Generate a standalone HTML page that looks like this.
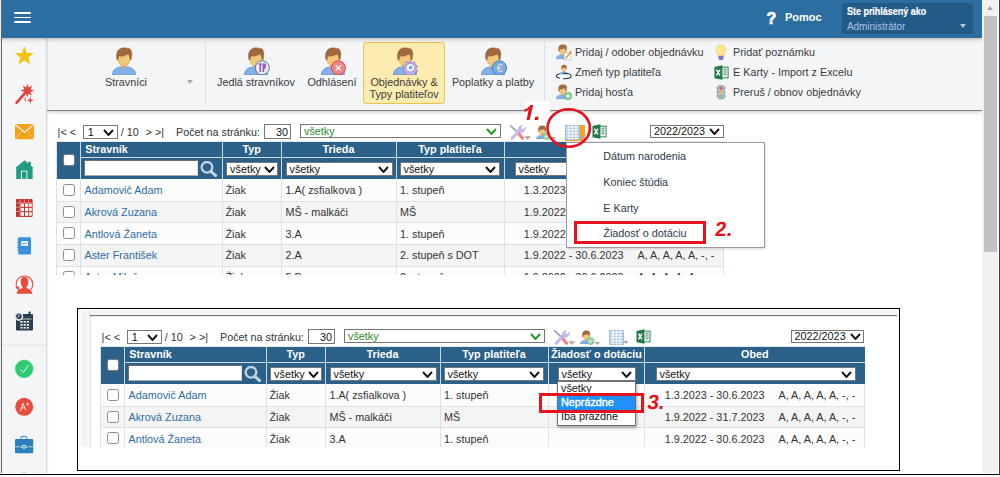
<!DOCTYPE html>
<html><head><meta charset="utf-8">
<style>
*{box-sizing:border-box}
html,body{margin:0;padding:0}
body{width:1000px;height:477px;overflow:hidden;position:relative;background:#fff;font-family:"Liberation Sans",sans-serif;font-size:10.8px;color:#333}
.a{position:absolute}
#hdr{left:0;top:0;width:982px;height:38px;background:#2c6ea2;z-index:5;box-shadow:0 1px 4px rgba(0,0,0,.28)}
#side{left:0;top:38px;width:47px;height:436px;background:#f4f5f7;border-right:1px solid #d8dadd;box-shadow:1px 0 1px rgba(0,0,0,.06);z-index:2}
#tb{left:47px;top:38px;width:935px;height:72px;background:#f4f5f7;box-shadow:0 1px 0 #7d828c, 0 2px 4px rgba(0,0,0,.22)}
#sb{left:982px;top:0;width:16px;height:473px;background:#f1f1f1;z-index:10}
#frameL{left:1px;top:0;width:1px;height:474px;background:#666;z-index:10}
#frameL0{left:0;top:0;width:1px;height:474px;background:#eee;z-index:10}
#frameW{left:998px;top:0;width:1px;height:474px;background:#fff;z-index:10}
#frameWB{left:0;top:473px;width:999px;height:1px;background:#fff;z-index:10}
#frameR{left:999px;top:0;width:1px;height:475px;background:#3a3f48;z-index:10}
#frameB{left:0;top:474px;width:1000px;height:1px;background:#000;z-index:10}
.tbt{color:#3a3a3a;text-align:center;white-space:nowrap;line-height:11px}
.lnk{color:#3a3a3a;white-space:nowrap}
</style></head><body>
<div id="hdr" class="a">
  <div class="a" style="left:14px;top:12px;width:17px;height:1.7px;background:#fff;border-radius:1px"></div>
  <div class="a" style="left:14px;top:16.7px;width:17px;height:1.7px;background:#fff;border-radius:1px"></div>
  <div class="a" style="left:14px;top:21.4px;width:17px;height:1.7px;background:#fff;border-radius:1px"></div>
  <div class="a" style="left:766.6px;top:9.8px;font:bold 16px 'Liberation Sans',sans-serif;color:#fff;-webkit-text-stroke:.7px #fff">?</div>
  <div class="a" style="left:785.4px;top:11px;font:bold 11.5px 'Liberation Sans',sans-serif;color:#fff;transform:scaleX(.955);transform-origin:0 0">Pomoc</div>
  <div class="a" style="left:842px;top:3px;width:131px;height:31px;background:#245a86;border-radius:3px">
    <div class="a" style="left:5px;top:2px;font:bold 10.67px 'Liberation Sans',sans-serif;color:#fff;transform:scaleX(.84);transform-origin:0 0;white-space:nowrap;-webkit-text-stroke:.2px #fff">Ste prihlásený ako</div>
    <div class="a" style="left:5px;top:17px;font:11.5px 'Liberation Sans',sans-serif;color:#a8c6e4;transform:scaleX(.86);transform-origin:0 0;white-space:nowrap">Administrátor</div>
    <div class="a" style="left:118px;top:21px;width:0;height:0;border-left:3.5px solid transparent;border-right:3.5px solid transparent;border-top:4px solid #b9c8d6"></div>
  </div>
</div>
<div id="side" class="a">
<svg class="a" style="left:0;top:0" width="46" height="436" viewBox="0 38 46 436">
  <path d="M24.4,46 L26.8,52.9 34,53.1 28.3,57.5 30.3,64.6 24.4,60.4 18.5,64.6 20.5,57.5 14.8,53.1 22,52.9 Z" fill="#f3c316"/>
  <path d="M16.6,102.6 L26.6,91.4" stroke="#e3463a" stroke-width="2.8" stroke-linecap="round"/>
  <path d="M27.4,83.6 L28.6,87.6 32.2,85.6 30.6,89.4 34.2,90.8 30.4,92 32,95.6 28.4,93.8 27.2,97.6 26,93.8 22.4,95.4 24.2,92 20.6,90.6 24.2,89.2 22.8,85.4 26.2,87.4 Z" fill="#e3463a"/>
  <path d="M30.2,96.6 L31,99.4 33.8,100.3 31,101.2 30.2,104 29.4,101.2 26.6,100.3 29.4,99.4 Z" fill="#e3463a"/>
  <path d="M25.2,97.5 v4" stroke="#e3463a" stroke-width="1"/>
  <rect x="15" y="124" width="19" height="15.3" fill="#f5a21b"/>
  <path d="M15.3,124.6 L24.5,132.2 33.7,124.6" fill="none" stroke="#fff" stroke-width="1.1"/>
  <path d="M15.3,138.8 L21.5,131.5 M33.7,138.8 L27.5,131.5" fill="none" stroke="#fde6c0" stroke-width=".6"/>
  <path d="M24.5,160.2 L33.8,168.2 L32.6,168.2 L32.6,179 L16.2,179 L16.2,168.2 L15,168.2 Z" fill="#1f9c83"/>
  <rect x="28.2" y="161.8" width="2.6" height="5" fill="#1f9c83"/>
  <rect x="21.4" y="171.2" width="5.5" height="8" fill="#1f9c83" stroke="#e6f4f0" stroke-width="1"/>
  <g fill="#c4302b">
    <rect x="16" y="199" width="16.6" height="17.9" rx="1"/>
  </g>
  <g fill="#fff">
    <rect x="20.7" y="203.6" width="3.3" height="3.2"/><rect x="25" y="203.6" width="3.3" height="3.2"/><rect x="29.2" y="203.6" width="2.5" height="3.2"/>
    <rect x="20.7" y="207.9" width="3.3" height="3.2"/><rect x="25" y="207.9" width="3.3" height="3.2"/><rect x="29.2" y="207.9" width="2.5" height="3.2"/>
    <rect x="20.7" y="212.2" width="3.3" height="3.6"/><rect x="25" y="212.2" width="3.3" height="3.6"/><rect x="29.2" y="212.2" width="2.5" height="3.6"/>
  </g>
  <path d="M16,202.9 H32.6 M16,207.2 H20 M16,211.5 H20 M20.1,199 V217 M24.4,199 V203 M28.7,199 V203" stroke="#f4a9a3" stroke-width=".7"/>
  <rect x="18.2" y="237.2" width="12.8" height="17.3" rx="1.2" fill="#3b91dc"/>
  <rect x="21.2" y="241.2" width="6.8" height="4.6" fill="#fff"/>
  <path d="M22,243.5 h5.2" stroke="#3b91dc" stroke-width=".8"/>
  <path d="M17,240 h2.4 M17,242.5 h2.4 M17,245 h2.4 M17,247.5 h2.4 M17,250 h2.4" stroke="#3b91dc" stroke-width=".9"/>
  <path d="M17.4,288.6 A8.3,8.3 0 1 1 30.8,289.6" fill="none" stroke="#e84b3c" stroke-width="1.1"/>
  <path d="M15.3,287.2 L18.8,290.4 L19.6,286.6 Z" fill="#e84b3c"/>
  <path d="M24.4,277 C21.4,277 20.6,279.6 20.8,282.4 C21,285 22,286.4 22.6,287 L22.6,288.2 C19,289 16.8,290.6 16.8,293.8 L32.2,293.8 C32.2,290.6 30,289 26.4,288.2 L26.4,287 C27,286.4 28,285 28.2,282.4 C28.4,279.6 27.6,277 24.4,277 Z" fill="#e84b3c"/>
  <rect x="16" y="314" width="17" height="16.6" rx="1" fill="#2c3e50"/>
  <rect x="17.4" y="318.6" width="14.2" height=".8" fill="#e8ecef"/>
  <rect x="28.5" y="311.6" width="2" height="3.5" fill="#2c3e50" transform="rotate(20 29.5 313)"/>
  <circle cx="18.9" cy="316.4" r="4.3" fill="#f4f5f7"/>
  <circle cx="18.9" cy="316.4" r="3.3" fill="#2c3e50" stroke="#e9edf0" stroke-width=".9"/>
  <path d="M18.9,314.4 v2.1 l-1.4,1.1" fill="none" stroke="#fff" stroke-width=".8"/>
  <g fill="#e8ecef">
    <rect x="20.4" y="321" width="2.2" height="1.8"/><rect x="23.6" y="321" width="2.2" height="1.8"/><rect x="26.8" y="321" width="2.2" height="1.8"/>
    <rect x="20.4" y="324" width="2.2" height="1.8"/><rect x="23.6" y="324" width="2.2" height="1.8"/><rect x="26.8" y="324" width="2.2" height="1.8"/>
    <rect x="20.4" y="327" width="2.2" height="1.6"/><rect x="23.6" y="327" width="2.2" height="1.6"/><rect x="26.8" y="327" width="2.2" height="1.6"/>
  </g>
  <rect x="2" y="344.5" width="44" height="1" fill="#dfe1e4"/>
  <circle cx="24.2" cy="368.9" r="8.8" fill="#2ecc71" stroke="#2ecc71" stroke-width="1" stroke-dasharray="1.3 1"/>
  <path d="M20.4,369.2 L23.4,372.4 L28.4,365.2" fill="none" stroke="#fff" stroke-width=".9"/>
  <circle cx="24.2" cy="406.8" r="9" fill="#e74c3c"/>
  <path d="M20.4,411 L22.8,403.2 L25.8,410.2 M21.4,408 L24.8,407.6 M27.6,402.6 v3.2 M26,404.2 h3.2" fill="none" stroke="#fbe3df" stroke-width="1"/>
  <rect x="21" y="436.4" width="5.8" height="3" rx="1" fill="none" stroke="#2980b9" stroke-width="1"/>
  <rect x="15" y="439" width="18.2" height="14.3" rx="1" fill="#2a80bc"/>
  <rect x="15" y="446.2" width="18.2" height="1.2" fill="#8fbfe0"/>
  <ellipse cx="24" cy="446.8" rx="1.9" ry="1.5" fill="#2a80bc" stroke="#fff" stroke-width="1"/>
  <circle cx="24.2" cy="481.5" r="9" fill="#2ecc71"/>
</svg>
</div>
<div id="tb" class="a"></div>
<svg width="0" height="0" style="position:absolute">
<defs>
<symbol id="person" viewBox="0 0 24 28">
  <path d="M0.5,27.6 C0.5,22.4 5,19.8 12,19.8 C19,19.8 23.5,22.4 23.5,27.6 Z" fill="#84b1ea" stroke="#5b8fd2" stroke-width=".8"/>
  <rect x="9.6" y="16" width="4.8" height="4.6" fill="#e0aa5c"/>
  <path d="M5.8,11.2 C5.8,6.6 8.4,4.6 12,4.6 C15.6,4.6 18.2,6.6 18.2,11.2 C18.2,15.6 15.6,19 12,19 C8.4,19 5.8,15.6 5.8,11.2 Z" fill="#f2c77a" stroke="#cf9a52" stroke-width=".6"/>
  <path d="M5,13 C3.8,8.2 4.5,3.6 8.4,1.6 C10.4,0.5 13.6,0.5 15.6,1.4 C17.2,1.1 18.6,2.1 19.1,3.6 C20.3,5.8 19.9,9.4 19,13 L18,12.2 C17.8,9.8 17.2,8.2 16.1,7.1 C14,8.6 10.2,9.6 6.9,9.1 C6.4,10.1 6.2,11.2 6.1,12.6 Z" fill="#a0693e" stroke="#8a5732" stroke-width=".4"/>
</symbol>
</defs></svg>
<div class="a" style="left:205px;top:42px;width:1px;height:63px;background:#dcdee2"></div>
<div class="a" style="left:544px;top:42px;width:1px;height:63px;background:#dcdee2"></div>
<svg class="a" style="left:112px;top:47px" width="24" height="28"><use href="#person"/></svg>
<div class="a tbt" style="left:96px;top:77px;width:60px">Stravníci</div>
<div class="a" style="left:187px;top:80px;width:0;height:0;border-left:3.5px solid transparent;border-right:3.5px solid transparent;border-top:4px solid #a9a9a9"></div>

<svg class="a" style="left:244px;top:47px" width="28" height="28">
  <svg x="0" y="0" width="24" height="28"><use href="#person"/></svg>
  <circle cx="18.3" cy="20.8" r="7" fill="#eeebf3" stroke="#557a9c" stroke-width="1"/>
  <path d="M14.6,17 h3.4 M16.3,17 v8 M19.4,16.8 v8.2 M19.4,16.8 c2.4,0 2.6,4.4 0,4.6" fill="none" stroke="#8a5db3" stroke-width="1.6"/>
</svg>
<div class="a tbt" style="left:211px;top:77px;width:90px">Jedlá stravníkov</div>

<svg class="a" style="left:321px;top:47px" width="28" height="28">
  <svg x="0" y="0" width="24" height="28"><use href="#person"/></svg>
  <circle cx="17.4" cy="20.8" r="7" fill="#f08686" stroke="#d9424e" stroke-width="1"/>
  <path d="M14.8,18.2 L20,23.4 M20,18.2 L14.8,23.4" stroke="#fff" stroke-width="1.3"/>
</svg>
<div class="a tbt" style="left:302px;top:77px;width:60px">Odhlásení</div>

<div class="a" style="left:363px;top:42px;width:82px;height:62px;background:#fcecb0;border:1px solid #f0c04a;border-radius:3px"></div>
<svg class="a" style="left:393px;top:47px" width="28" height="28">
  <svg x="0" y="0" width="24" height="28"><use href="#person"/></svg>
  <g transform="translate(17.3,20.8)">
    <path d="M0,-7.5 L1.6,-5.2 4.4,-5.9 4.9,-3.1 7.3,-1.6 6,1 7.3,3.4 4.7,4.6 4.1,7.4 1.4,6.7 -0.2,7.8 -1.8,6.6 -4.4,7.2 -4.9,4.5 -7.4,3.1 -6,0.8 -7.2,-1.9 -4.6,-3.2 -4,-6 -1.4,-5.3 Z" fill="#c4b2ea" stroke="#9378cc" stroke-width=".7"/>
    <circle r="4.3" fill="#fff" stroke="#a38bd6" stroke-width="1"/>
    <circle r="1.9" cx=".3" cy="-.2" fill="#7aa6e0"/>
  </g>
</svg>
<div class="a tbt" style="left:364px;top:77px;width:80px;line-height:11.7px">Objednávky &amp;<br>Typy platiteľov</div>

<svg class="a" style="left:481px;top:47px" width="28" height="28">
  <svg x="0" y="0" width="24" height="28"><use href="#person"/></svg>
  <circle cx="18.4" cy="21" r="7.2" fill="#79a9e6" stroke="#4a80c2" stroke-width="1"/>
  <text x="18.6" y="25.2" font-family="Liberation Sans" font-size="11" fill="#f5e7a8" text-anchor="middle">€</text>
</svg>
<div class="a tbt" style="left:448px;top:77px;width:90px">Poplatky a platby</div>

<div class="a lnk" style="left:575px;top:46px">Pridaj / odober objednávku</div>
<div class="a lnk" style="left:575px;top:66px">Zmeň typ platiteľa</div>
<div class="a lnk" style="left:575px;top:86px">Pridaj hosťa</div>
<div class="a lnk" style="left:733px;top:46px">Pridať poznámku</div>
<div class="a lnk" style="left:733px;top:66px">E Karty - Import z Excelu</div>
<div class="a lnk" style="left:733px;top:86px">Preruš / obnov objednávky</div>

<svg class="a" style="left:556px;top:44px" width="17" height="17">
  <svg x="0" y="0" width="13" height="15.5" viewBox="0 0 24 28"><use href="#person"/></svg>
  <path d="M8,9 h7 v7 h-7 z" fill="#fff" stroke="#9ab" stroke-width=".6"/>
  <path d="M9.5,14.5 L14.5,8.5" stroke="#e0a030" stroke-width="1.6"/>
  <path d="M14,8.8 l1,-1.2" stroke="#e0555a" stroke-width="1.6"/>
</svg>
<svg class="a" style="left:555px;top:63px" width="18" height="17">
  <svg x="4.6" y="1.6" width="8.6" height="10" viewBox="0 0 24 28"><use href="#person"/></svg>
  <ellipse cx="8.8" cy="13" rx="7.4" ry="2.7" fill="none" stroke="#2a3a4a" stroke-width="1.1" stroke-dasharray="9 3"/>
</svg>
<svg class="a" style="left:556px;top:84px" width="17" height="17">
  <svg x="0" y="0" width="13" height="15.5" viewBox="0 0 24 28"><use href="#person"/></svg>
  <circle cx="12" cy="12" r="3.7" fill="#7fcf94" stroke="#52a86a" stroke-width=".6"/>
  <path d="M12,9.8 v4.4 M9.8,12 h4.4" stroke="#fff" stroke-width="1.2"/>
</svg>
<svg class="a" style="left:714px;top:44px" width="14" height="17">
  <path d="M7,1 C3.8,1 2,3.3 2,6 C2,8.3 3.6,9.4 4.3,11.5 L9.7,11.5 C10.4,9.4 12,8.3 12,6 C12,3.3 10.2,1 7,1 Z" fill="#fae78e" stroke="#e6cf6a" stroke-width=".6"/>
  <path d="M4.4,11.8 h5.2 v2.4 c0,1 -1,1.8 -2.6,1.8 c-1.6,0 -2.6,-.8 -2.6,-1.8 z" fill="#8a6fc0"/>
</svg>
<svg class="a" style="left:713.5px;top:65px" width="15" height="15" viewBox="0 0 16 16">
  <path d="M0.5,2 L9,0.3 L9,15.7 L0.5,14 Z" fill="#21794a"/>
  <rect x="8.5" y="2.3" width="6.5" height="11.4" fill="#fff" stroke="#21794a" stroke-width="1"/>
  <path d="M10,4.5 h3.5 M10,6.5 h3.5 M10,8.5 h3.5 M10,10.5 h3.5" stroke="#21794a" stroke-width=".9"/>
  <path d="M2.6,5 L6.4,11 M6.4,5 L2.6,11" stroke="#fff" stroke-width="1.5"/>
</svg>
<svg class="a" style="left:715px;top:84px" width="12" height="16">
  <rect x="2.5" y="1.5" width="7" height="13.5" rx="2" fill="#b3bfcc" stroke="#8996a6" stroke-width=".7"/>
  <path d="M1,4 h1.5 M9.5,4 h1.5 M1,8 h1.5 M9.5,8 h1.5 M1,12 h1.5 M9.5,12 h1.5" stroke="#8996a6" stroke-width="1"/>
  <circle cx="6" cy="4.3" r="1.7" fill="#e06060"/>
  <circle cx="6" cy="8.3" r="1.7" fill="#e8b84a"/>
  <circle cx="6" cy="12.3" r="1.7" fill="#7cc47c"/>
</svg>

<div class="a" style="left:57.6px;top:126.26px;line-height:12px;font-size:10.8px;font-weight:normal;color:#333;white-space:nowrap;">|&lt; &lt;</div>
<div class="a" style="left:83.2px;top:125.4px;width:34.5px;height:13.4px;background:#fff;border:1px solid #767676"></div><div class="a" style="left:87.7px;top:125.6px;line-height:13px;color:#111;font-size:10.8px;white-space:nowrap">1</div><svg class="a" style="left:103.2px;top:128.7px" width="11" height="7"><path d="M1,1 L5.5,6 L10,1" fill="none" stroke="#111" stroke-width="1.9"/></svg>
<div class="a" style="left:120.8px;top:126.26px;line-height:12px;font-size:10.8px;font-weight:normal;color:#333;white-space:nowrap;">/ 10</div>
<div class="a" style="left:145.6px;top:126.26px;line-height:12px;font-size:10.8px;font-weight:normal;color:#333;white-space:nowrap;">&gt; &gt;|</div>
<div class="a" style="left:176px;top:126.26px;line-height:12px;font-size:10.8px;font-weight:normal;color:#333;white-space:nowrap;">Počet na stránku:</div>
<div class="a" style="left:264px;top:124px;width:26.5px;height:15px;background:#fff;border:1px solid #767676"></div>
<div class="a" style="left:276px;top:126.26px;line-height:12px;font-size:10.8px;font-weight:normal;color:#111;white-space:nowrap;">30</div>
<div class="a" style="left:300px;top:124px;width:200.5px;height:14.2px;background:#fff;border:1px solid #767676"></div><div class="a" style="left:304px;top:124.6px;line-height:13px;color:#2e8b2e;font-size:10.8px;white-space:nowrap">všetky</div><svg class="a" style="left:486.0px;top:127.69999999999999px" width="11" height="7"><path d="M1,1 L5.5,6 L10,1" fill="none" stroke="#1c9a1c" stroke-width="1.9"/></svg>
<svg class="a" style="left:510px;top:124.6px" width="22" height="16">
<path d="M0.8,0.8 L6.8,6.6" stroke="#8da5bd" stroke-width="1.6" stroke-linecap="round"/>
<path d="M8.6,8.4 L12.6,13.2" stroke="#ee8585" stroke-width="3.2" stroke-linecap="round"/>
<path d="M2.2,13.2 L9.6,5.6" stroke="#c9b9ea" stroke-width="3.2" stroke-linecap="round"/>
<path d="M8.4,6.6 C7.6,3.6 9.4,0.6 12.4,0.6 L10.8,2.6 L12,4.6 L14.2,4 L15.4,2 C15.8,5 13.4,7.6 10.2,7.4 Z" fill="#c9b9ea" stroke="#ad9bd8" stroke-width=".5"/>
<path d="M14.2,11.2 h7 l-3.5,3.6 z" fill="#a9a9a9"/>
</svg>
<svg class="a" style="left:536px;top:124.6px" width="22" height="16">
<svg x="0" y="0" width="12" height="14.5" viewBox="0 0 24 28"><use href="#person"/></svg>
<circle cx="10.5" cy="11" r="3.6" fill="#9bd3a6" stroke="#6cb57c" stroke-width=".6"/>
<path d="M8.8,11 l1.3,1.4 2.3,-2.6" fill="none" stroke="#fff" stroke-width=".9"/>
<path d="M14.5,12 h5.6 l-2.8,3 z" fill="#a9a9a9"/>
</svg>
<svg class="a" style="left:565px;top:124.6px" width="22" height="18"><rect x="0" y="0" width="20" height="17.2" fill="#f9a51a"/><rect x="0.4" y="0.4" width="14" height="14.4" fill="#fff"/><rect x="0.5" y="0.5" width="14" height="14" fill="#cfe0f3" stroke="#8fb2d8" stroke-width=".8"/><path d="M4,0.5 v14 M7.5,0.5 v14 M11,0.5 v14" stroke="#fff" stroke-width="1.4"/><path d="M0.5,3.5 h14 M0.5,6.5 h14 M0.5,9.5 h14 M0.5,12.5 h14" stroke="#9dbde0" stroke-width=".5"/><path d="M14,11 h5.6 l-2.8,3 z" fill="#a9a9a9"/></svg>
<svg class="a" style="left:591.8px;top:124.4px" width="15" height="15" viewBox="0 0 16 16">
<path d="M0.5,2 L9,0.3 L9,15.7 L0.5,14 Z" fill="#21794a"/>
<rect x="8.5" y="2.3" width="6.5" height="11.4" fill="#fff" stroke="#21794a" stroke-width="1"/>
<path d="M10,4.5 h3.5 M10,6.5 h3.5 M10,8.5 h3.5 M10,10.5 h3.5" stroke="#21794a" stroke-width=".9"/>
<path d="M2.6,5 L6.4,11 M6.4,5 L2.6,11" stroke="#fff" stroke-width="1.5"/>
</svg>
<div class="a" style="left:650px;top:125px;width:73.75px;height:13.2px;background:#fff;border:1px solid #767676"></div><div class="a" style="left:654px;top:125.1px;line-height:13px;color:#111;font-size:10.8px;white-space:nowrap">2022/2023</div><svg class="a" style="left:709.25px;top:128.2px" width="11" height="7"><path d="M1,1 L5.5,6 L10,1" fill="none" stroke="#111" stroke-width="1.9"/></svg>
<div class="a" style="left:56px;top:141px;width:668px;height:1px;background:#e3eaef"></div>
<div class="a" style="left:56px;top:142px;width:668px;height:133px;overflow:hidden">
<div class="a" style="left:1px;top:0;width:667px;height:37px;background:#2b6089"></div>
<div class="a" style="left:0;top:0;width:1px;height:37px;background:#dbe4ea"></div>
<div class="a" style="left:24.5px;top:15px;width:643.5px;height:1.4px;background:#cddbe6"></div>
<div class="a" style="left:0;top:37px;width:668px;height:22.69999999999999px;background:#fcfcfc"></div>
<div class="a" style="left:0;top:59.69999999999999px;width:668px;height:21.700000000000017px;background:#f4f4f4"></div>
<div class="a" style="left:0;top:81.4px;width:668px;height:21.69999999999999px;background:#fcfcfc"></div>
<div class="a" style="left:0;top:103.1px;width:668px;height:21.700000000000017px;background:#f4f4f4"></div>
<div class="a" style="left:0;top:124.80000000000001px;width:668px;height:21.69999999999999px;background:#fcfcfc"></div>
<div class="a" style="left:0;top:58.69999999999999px;width:668px;height:1.1px;background:#d9e3ea"></div>
<div class="a" style="left:0;top:80.4px;width:668px;height:1.1px;background:#d9e3ea"></div>
<div class="a" style="left:0;top:102.1px;width:668px;height:1.1px;background:#d9e3ea"></div>
<div class="a" style="left:0;top:123.80000000000001px;width:668px;height:1.1px;background:#d9e3ea"></div>
<div class="a" style="left:0;top:145.5px;width:668px;height:1.1px;background:#d9e3ea"></div>
<div class="a" style="left:24.0px;top:0;width:1.3px;height:37px;background:#cddbe6"></div>
<div class="a" style="left:24.0px;top:37px;width:1.2px;height:200px;background:#d9e3ea"></div>
<div class="a" style="left:166.0px;top:0;width:1.3px;height:37px;background:#cddbe6"></div>
<div class="a" style="left:166.0px;top:37px;width:1.2px;height:200px;background:#d9e3ea"></div>
<div class="a" style="left:224.5px;top:0;width:1.3px;height:37px;background:#cddbe6"></div>
<div class="a" style="left:224.5px;top:37px;width:1.2px;height:200px;background:#d9e3ea"></div>
<div class="a" style="left:339.5px;top:0;width:1.3px;height:37px;background:#cddbe6"></div>
<div class="a" style="left:339.5px;top:37px;width:1.2px;height:200px;background:#d9e3ea"></div>
<div class="a" style="left:447.5px;top:0;width:1.3px;height:37px;background:#cddbe6"></div>
<div class="a" style="left:447.5px;top:37px;width:1.2px;height:200px;background:#d9e3ea"></div>
<div class="a" style="left:0;top:37px;width:1px;height:200px;background:#d9e3ea"></div>
<div class="a" style="left:667px;top:37px;width:1px;height:200px;background:#d9e3ea"></div>
<div class="a" style="left:7.2px;top:12.2px;width:12px;height:12px;background:#fff;border:1.2px solid #7b7b7b;border-radius:2.5px"></div>
<div class="a" style="left:29.2px;top:1.26px;line-height:12px;font-size:10.8px;font-weight:bold;color:#fff;white-space:nowrap;">Stravník</div>
<div class="a" style="left:28.2px;top:18.3px;width:113.5px;height:15.3px;background:#fff;border:1px solid #6d6d6d;border-right-color:#ddd;border-bottom-color:#aaa"></div>
<svg class="a" style="left:143.6px;top:19.2px" width="18" height="16">
<circle cx="7" cy="6.3" r="5.3" fill="none" stroke="#c3d3e0" stroke-width="2.3"/>
<path d="M10.8,10.4 L15.6,14.6" stroke="#c3d3e0" stroke-width="3" stroke-linecap="round"/>
</svg>
<div class="a" style="left:166.5px;width:58.5px;text-align:center;top:1.26px;line-height:12px;font-size:10.8px;font-weight:bold;color:#fff;white-space:nowrap">Typ</div>
<div class="a" style="left:170.3px;top:20.4px;width:52px;height:13.4px;background:#fff;border:1px solid #767676"></div><div class="a" style="left:174.10000000000002px;top:20.599999999999998px;line-height:13px;color:#111;font-size:10.8px;white-space:nowrap">všetky</div><svg class="a" style="left:207.8px;top:23.7px" width="11" height="7"><path d="M1,1 L5.5,6 L10,1" fill="none" stroke="#111" stroke-width="1.9"/></svg>
<div class="a" style="left:225px;width:115px;text-align:center;top:1.26px;line-height:12px;font-size:10.8px;font-weight:bold;color:#fff;white-space:nowrap">Trieda</div>
<div class="a" style="left:229.5px;top:20.4px;width:107px;height:13.4px;background:#fff;border:1px solid #767676"></div><div class="a" style="left:233.5px;top:20.599999999999998px;line-height:13px;color:#111;font-size:10.8px;white-space:nowrap">všetky</div><svg class="a" style="left:322.0px;top:23.7px" width="11" height="7"><path d="M1,1 L5.5,6 L10,1" fill="none" stroke="#111" stroke-width="1.9"/></svg>
<div class="a" style="left:340px;width:108px;text-align:center;top:1.26px;line-height:12px;font-size:10.8px;font-weight:bold;color:#fff;white-space:nowrap">Typ platiteľa</div>
<div class="a" style="left:343.5px;top:20.4px;width:100px;height:13.4px;background:#fff;border:1px solid #767676"></div><div class="a" style="left:347.5px;top:20.599999999999998px;line-height:13px;color:#111;font-size:10.8px;white-space:nowrap">všetky</div><svg class="a" style="left:429.0px;top:23.7px" width="11" height="7"><path d="M1,1 L5.5,6 L10,1" fill="none" stroke="#111" stroke-width="1.9"/></svg>
<div class="a" style="left:448px;width:220px;text-align:center;top:1.26px;line-height:12px;font-size:10.8px;font-weight:bold;color:#fff;white-space:nowrap">Obed</div>
<div class="a" style="left:458.5px;top:20.4px;width:200px;height:13.4px;background:#fff;border:1px solid #767676"></div><div class="a" style="left:462.5px;top:20.599999999999998px;line-height:13px;color:#111;font-size:10.8px;white-space:nowrap">všetky</div><svg class="a" style="left:644.0px;top:23.7px" width="11" height="7"><path d="M1,1 L5.5,6 L10,1" fill="none" stroke="#111" stroke-width="1.9"/></svg>
<div class="a" style="left:7.2px;top:42.0px;width:12px;height:12px;background:#fff;border:1.2px solid #8d8d8d;border-radius:2.5px"></div>
<div class="a" style="left:28.5px;top:42.16px;line-height:12px;font-size:10.8px;font-weight:normal;color:#2e6da4;white-space:nowrap;">Adamovič Adam</div>
<div class="a" style="left:169.4px;top:42.16px;line-height:12px;font-size:10.8px;font-weight:normal;color:#333;white-space:nowrap;">Žiak</div>
<div class="a" style="left:229.4px;top:42.16px;line-height:12px;font-size:10.8px;font-weight:normal;color:#333;white-space:nowrap;">1.A( zsfialkova )</div>
<div class="a" style="left:344px;top:42.16px;line-height:12px;font-size:10.8px;font-weight:normal;color:#333;white-space:nowrap;">1. stupeň</div>
<div class="a" style="left:467.75px;top:42.16px;line-height:12px;font-size:10.8px;font-weight:normal;color:#333;white-space:nowrap;">1.3.2023 - 30.6.2023</div>
<div class="a" style="left:581.5px;top:42.16px;line-height:12px;font-size:10.8px;font-weight:normal;color:#333;white-space:nowrap;">A, A, A, A, A, -, -</div>
<div class="a" style="left:7.2px;top:63.7px;width:12px;height:12px;background:#fff;border:1.2px solid #8d8d8d;border-radius:2.5px"></div>
<div class="a" style="left:28.5px;top:63.86px;line-height:12px;font-size:10.8px;font-weight:normal;color:#2e6da4;white-space:nowrap;">Akrová Zuzana</div>
<div class="a" style="left:169.4px;top:63.86px;line-height:12px;font-size:10.8px;font-weight:normal;color:#333;white-space:nowrap;">Žiak</div>
<div class="a" style="left:229.4px;top:63.86px;line-height:12px;font-size:10.8px;font-weight:normal;color:#333;white-space:nowrap;">MŠ - malkáči</div>
<div class="a" style="left:344px;top:63.86px;line-height:12px;font-size:10.8px;font-weight:normal;color:#333;white-space:nowrap;">MŠ</div>
<div class="a" style="left:467.75px;top:63.86px;line-height:12px;font-size:10.8px;font-weight:normal;color:#333;white-space:nowrap;">1.9.2022 - 31.7.2023</div>
<div class="a" style="left:581.5px;top:63.86px;line-height:12px;font-size:10.8px;font-weight:normal;color:#333;white-space:nowrap;">A, A, A, A, A, -, -</div>
<div class="a" style="left:7.2px;top:85.4px;width:12px;height:12px;background:#fff;border:1.2px solid #8d8d8d;border-radius:2.5px"></div>
<div class="a" style="left:28.5px;top:85.56px;line-height:12px;font-size:10.8px;font-weight:normal;color:#2e6da4;white-space:nowrap;">Antlová Žaneta</div>
<div class="a" style="left:169.4px;top:85.56px;line-height:12px;font-size:10.8px;font-weight:normal;color:#333;white-space:nowrap;">Žiak</div>
<div class="a" style="left:229.4px;top:85.56px;line-height:12px;font-size:10.8px;font-weight:normal;color:#333;white-space:nowrap;">3.A</div>
<div class="a" style="left:344px;top:85.56px;line-height:12px;font-size:10.8px;font-weight:normal;color:#333;white-space:nowrap;">1. stupeň</div>
<div class="a" style="left:467.75px;top:85.56px;line-height:12px;font-size:10.8px;font-weight:normal;color:#333;white-space:nowrap;">1.9.2022 - 30.6.2023</div>
<div class="a" style="left:581.5px;top:85.56px;line-height:12px;font-size:10.8px;font-weight:normal;color:#333;white-space:nowrap;">A, A, A, A, A, -, -</div>
<div class="a" style="left:7.2px;top:107.1px;width:12px;height:12px;background:#fff;border:1.2px solid #8d8d8d;border-radius:2.5px"></div>
<div class="a" style="left:28.5px;top:107.26px;line-height:12px;font-size:10.8px;font-weight:normal;color:#2e6da4;white-space:nowrap;">Aster František</div>
<div class="a" style="left:169.4px;top:107.26px;line-height:12px;font-size:10.8px;font-weight:normal;color:#333;white-space:nowrap;">Žiak</div>
<div class="a" style="left:229.4px;top:107.26px;line-height:12px;font-size:10.8px;font-weight:normal;color:#333;white-space:nowrap;">2.A</div>
<div class="a" style="left:344px;top:107.26px;line-height:12px;font-size:10.8px;font-weight:normal;color:#333;white-space:nowrap;">2. stupeň s DOT</div>
<div class="a" style="left:467.75px;top:107.26px;line-height:12px;font-size:10.8px;font-weight:normal;color:#333;white-space:nowrap;">1.9.2022 - 30.6.2023</div>
<div class="a" style="left:581.5px;top:107.26px;line-height:12px;font-size:10.8px;font-weight:normal;color:#333;white-space:nowrap;">A, A, A, A, A, -, -</div>
<div class="a" style="left:7.2px;top:128.8px;width:12px;height:12px;background:#fff;border:1.2px solid #8d8d8d;border-radius:2.5px"></div>
<div class="a" style="left:28.5px;top:128.96px;line-height:12px;font-size:10.8px;font-weight:normal;color:#2e6da4;white-space:nowrap;">Aster Miloš</div>
<div class="a" style="left:169.4px;top:128.96px;line-height:12px;font-size:10.8px;font-weight:normal;color:#333;white-space:nowrap;">Žiak</div>
<div class="a" style="left:229.4px;top:128.96px;line-height:12px;font-size:10.8px;font-weight:normal;color:#333;white-space:nowrap;">5.B</div>
<div class="a" style="left:344px;top:128.96px;line-height:12px;font-size:10.8px;font-weight:normal;color:#333;white-space:nowrap;">2. stupeň</div>
<div class="a" style="left:467.75px;top:128.96px;line-height:12px;font-size:10.8px;font-weight:normal;color:#333;white-space:nowrap;">1.9.2022 - 30.6.2023</div>
<div class="a" style="left:581.5px;top:128.96px;line-height:12px;font-size:10.8px;font-weight:normal;color:#333;white-space:nowrap;">A, A, A, A, A, -, -</div>
</div>
<div class="a" style="left:565.5px;top:141.8px;width:199px;height:106.4px;background:#fff;border:1px solid #9a9a9a;box-shadow:1px 1px 2px rgba(0,0,0,.15)"></div>
<div class="a" style="left:603.3px;top:150.26px;line-height:12px;font-size:10.8px;font-weight:normal;color:#2c3a4a;white-space:nowrap;">Dátum narodenia</div>
<div class="a" style="left:603.3px;top:176.26px;line-height:12px;font-size:10.8px;font-weight:normal;color:#2c3a4a;white-space:nowrap;">Koniec štúdia</div>
<div class="a" style="left:603.3px;top:201.76px;line-height:12px;font-size:10.8px;font-weight:normal;color:#2c3a4a;white-space:nowrap;">E Karty</div>
<div class="a" style="left:603.3px;top:227.26px;line-height:12px;font-size:10.8px;font-weight:normal;color:#2c3a4a;white-space:nowrap;">Žiadosť o dotáciu</div>
<div class="a" style="left:574px;top:220.6px;width:132px;height:23.2px;border:3px solid #e5131d"></div>
<div class="a" style="left:714.2px;top:217.2px;font:bold 20.5px Liberation Sans,sans-serif;color:#e5131d;line-height:24px;transform:skewX(-6deg);transform-origin:0 100%">2.</div>
<div class="a" style="left:524.6px;top:100.5px;width:25px;height:22px;background:#fff"></div>
<svg class="a" style="left:520px;top:100px" width="24" height="24"><path d="M13.3,5 L10.3,5 C9.2,7 7,8.6 4.3,9.4 L4.6,11.8 C6.2,11.4 7.6,10.6 8.6,9.8 L6.6,20 L9.6,20 Z M15.2,16.8 L18.6,16.8 L18,20 L14.6,20 Z" fill="#e5131d"/></svg>
<svg class="a" style="left:540px;top:100px" width="60" height="55"><ellipse cx="28.7" cy="28" rx="21.2" ry="18.8" fill="none" stroke="#e5131d" stroke-width="2.6"/></svg>
<div class="a" style="left:77px;top:308px;width:823px;height:163px;border:1.2px solid #000;background:#fff"></div>
<div class="a" style="left:81px;top:310px;width:816px;height:137px;overflow:hidden"><div class="a" style="left:-81px;top:-310px;width:1000px;height:477px">
<div class="a" style="left:81px;top:310px;width:9.7px;height:140px;background:#f4f5f7;border-right:1px solid #dfe1e4"></div>
<div class="a" style="left:90.4px;top:310px;width:807px;height:5px;background:#f4f5f7;box-shadow:0 1px 1px #777"></div>
<div class="a" style="left:101.6px;top:331.26px;line-height:12px;font-size:10.8px;font-weight:normal;color:#333;white-space:nowrap;">|&lt; &lt;</div>
<div class="a" style="left:127.2px;top:330.4px;width:34.5px;height:13.4px;background:#fff;border:1px solid #767676"></div><div class="a" style="left:131.7px;top:330.59999999999997px;line-height:13px;color:#111;font-size:10.8px;white-space:nowrap">1</div><svg class="a" style="left:147.2px;top:333.7px" width="11" height="7"><path d="M1,1 L5.5,6 L10,1" fill="none" stroke="#111" stroke-width="1.9"/></svg>
<div class="a" style="left:164.8px;top:331.26px;line-height:12px;font-size:10.8px;font-weight:normal;color:#333;white-space:nowrap;">/ 10</div>
<div class="a" style="left:189.6px;top:331.26px;line-height:12px;font-size:10.8px;font-weight:normal;color:#333;white-space:nowrap;">&gt; &gt;|</div>
<div class="a" style="left:220px;top:331.26px;line-height:12px;font-size:10.8px;font-weight:normal;color:#333;white-space:nowrap;">Počet na stránku:</div>
<div class="a" style="left:308px;top:329px;width:26.5px;height:15px;background:#fff;border:1px solid #767676"></div>
<div class="a" style="left:320px;top:331.26px;line-height:12px;font-size:10.8px;font-weight:normal;color:#111;white-space:nowrap;">30</div>
<div class="a" style="left:344px;top:329px;width:200.5px;height:14.2px;background:#fff;border:1px solid #767676"></div><div class="a" style="left:348px;top:329.6px;line-height:13px;color:#2e8b2e;font-size:10.8px;white-space:nowrap">všetky</div><svg class="a" style="left:530.0px;top:332.70000000000005px" width="11" height="7"><path d="M1,1 L5.5,6 L10,1" fill="none" stroke="#1c9a1c" stroke-width="1.9"/></svg>
<svg class="a" style="left:554px;top:329.6px" width="22" height="16">
<path d="M0.8,0.8 L6.8,6.6" stroke="#8da5bd" stroke-width="1.6" stroke-linecap="round"/>
<path d="M8.6,8.4 L12.6,13.2" stroke="#ee8585" stroke-width="3.2" stroke-linecap="round"/>
<path d="M2.2,13.2 L9.6,5.6" stroke="#c9b9ea" stroke-width="3.2" stroke-linecap="round"/>
<path d="M8.4,6.6 C7.6,3.6 9.4,0.6 12.4,0.6 L10.8,2.6 L12,4.6 L14.2,4 L15.4,2 C15.8,5 13.4,7.6 10.2,7.4 Z" fill="#c9b9ea" stroke="#ad9bd8" stroke-width=".5"/>
<path d="M14.2,11.2 h7 l-3.5,3.6 z" fill="#a9a9a9"/>
</svg>
<svg class="a" style="left:580px;top:329.6px" width="22" height="16">
<svg x="0" y="0" width="12" height="14.5" viewBox="0 0 24 28"><use href="#person"/></svg>
<circle cx="10.5" cy="11" r="3.6" fill="#9bd3a6" stroke="#6cb57c" stroke-width=".6"/>
<path d="M8.8,11 l1.3,1.4 2.3,-2.6" fill="none" stroke="#fff" stroke-width=".9"/>
<path d="M14.5,12 h5.6 l-2.8,3 z" fill="#a9a9a9"/>
</svg>
<svg class="a" style="left:609px;top:329.6px" width="22" height="18"><rect x="0.5" y="0.5" width="14" height="14" fill="#cfe0f3" stroke="#8fb2d8" stroke-width=".8"/><path d="M4,0.5 v14 M7.5,0.5 v14 M11,0.5 v14" stroke="#fff" stroke-width="1.4"/><path d="M0.5,3.5 h14 M0.5,6.5 h14 M0.5,9.5 h14 M0.5,12.5 h14" stroke="#9dbde0" stroke-width=".5"/><path d="M14,11 h5.6 l-2.8,3 z" fill="#a9a9a9"/></svg>
<svg class="a" style="left:635.8px;top:329.4px" width="15" height="15" viewBox="0 0 16 16">
<path d="M0.5,2 L9,0.3 L9,15.7 L0.5,14 Z" fill="#21794a"/>
<rect x="8.5" y="2.3" width="6.5" height="11.4" fill="#fff" stroke="#21794a" stroke-width="1"/>
<path d="M10,4.5 h3.5 M10,6.5 h3.5 M10,8.5 h3.5 M10,10.5 h3.5" stroke="#21794a" stroke-width=".9"/>
<path d="M2.6,5 L6.4,11 M6.4,5 L2.6,11" stroke="#fff" stroke-width="1.5"/>
</svg>
<div class="a" style="left:790.6px;top:330px;width:73.75px;height:13.2px;background:#fff;border:1px solid #767676"></div><div class="a" style="left:794.6px;top:330.1px;line-height:13px;color:#111;font-size:10.8px;white-space:nowrap">2022/2023</div><svg class="a" style="left:849.85px;top:333.20000000000005px" width="11" height="7"><path d="M1,1 L5.5,6 L10,1" fill="none" stroke="#111" stroke-width="1.9"/></svg>
<div class="a" style="left:100px;top:346px;width:764.6px;height:1px;background:#e3eaef"></div>
<div class="a" style="left:100px;top:347px;width:764.6px;height:100.2px;overflow:hidden">
<div class="a" style="left:1px;top:0;width:763.6px;height:37px;background:#2b6089"></div>
<div class="a" style="left:0;top:0;width:1px;height:37px;background:#dbe4ea"></div>
<div class="a" style="left:24.5px;top:15px;width:740.1px;height:1.4px;background:#cddbe6"></div>
<div class="a" style="left:0;top:37px;width:764.6px;height:22.69999999999999px;background:#fcfcfc"></div>
<div class="a" style="left:0;top:59.69999999999999px;width:764.6px;height:21.700000000000017px;background:#f4f4f4"></div>
<div class="a" style="left:0;top:81.4px;width:764.6px;height:21.69999999999999px;background:#fcfcfc"></div>
<div class="a" style="left:0;top:103.1px;width:764.6px;height:21.700000000000017px;background:#f4f4f4"></div>
<div class="a" style="left:0;top:124.80000000000001px;width:764.6px;height:21.69999999999999px;background:#fcfcfc"></div>
<div class="a" style="left:0;top:58.69999999999999px;width:764.6px;height:1.1px;background:#d9e3ea"></div>
<div class="a" style="left:0;top:80.4px;width:764.6px;height:1.1px;background:#d9e3ea"></div>
<div class="a" style="left:0;top:102.1px;width:764.6px;height:1.1px;background:#d9e3ea"></div>
<div class="a" style="left:0;top:123.80000000000001px;width:764.6px;height:1.1px;background:#d9e3ea"></div>
<div class="a" style="left:0;top:145.5px;width:764.6px;height:1.1px;background:#d9e3ea"></div>
<div class="a" style="left:24.0px;top:0;width:1.3px;height:37px;background:#cddbe6"></div>
<div class="a" style="left:24.0px;top:37px;width:1.2px;height:200px;background:#d9e3ea"></div>
<div class="a" style="left:166.0px;top:0;width:1.3px;height:37px;background:#cddbe6"></div>
<div class="a" style="left:166.0px;top:37px;width:1.2px;height:200px;background:#d9e3ea"></div>
<div class="a" style="left:224.5px;top:0;width:1.3px;height:37px;background:#cddbe6"></div>
<div class="a" style="left:224.5px;top:37px;width:1.2px;height:200px;background:#d9e3ea"></div>
<div class="a" style="left:339.5px;top:0;width:1.3px;height:37px;background:#cddbe6"></div>
<div class="a" style="left:339.5px;top:37px;width:1.2px;height:200px;background:#d9e3ea"></div>
<div class="a" style="left:447.5px;top:0;width:1.3px;height:37px;background:#cddbe6"></div>
<div class="a" style="left:447.5px;top:37px;width:1.2px;height:200px;background:#d9e3ea"></div>
<div class="a" style="left:543.6px;top:0;width:1.3px;height:37px;background:#cddbe6"></div>
<div class="a" style="left:543.6px;top:37px;width:1.2px;height:200px;background:#d9e3ea"></div>
<div class="a" style="left:0;top:37px;width:1px;height:200px;background:#d9e3ea"></div>
<div class="a" style="left:763.6px;top:37px;width:1px;height:200px;background:#d9e3ea"></div>
<div class="a" style="left:7.2px;top:12.2px;width:12px;height:12px;background:#fff;border:1.2px solid #7b7b7b;border-radius:2.5px"></div>
<div class="a" style="left:29.2px;top:1.26px;line-height:12px;font-size:10.8px;font-weight:bold;color:#fff;white-space:nowrap;">Stravník</div>
<div class="a" style="left:28.2px;top:18.3px;width:113.5px;height:15.3px;background:#fff;border:1px solid #6d6d6d;border-right-color:#ddd;border-bottom-color:#aaa"></div>
<svg class="a" style="left:143.6px;top:19.2px" width="18" height="16">
<circle cx="7" cy="6.3" r="5.3" fill="none" stroke="#c3d3e0" stroke-width="2.3"/>
<path d="M10.8,10.4 L15.6,14.6" stroke="#c3d3e0" stroke-width="3" stroke-linecap="round"/>
</svg>
<div class="a" style="left:166.5px;width:58.5px;text-align:center;top:1.26px;line-height:12px;font-size:10.8px;font-weight:bold;color:#fff;white-space:nowrap">Typ</div>
<div class="a" style="left:170.3px;top:20.4px;width:52px;height:13.4px;background:#fff;border:1px solid #767676"></div><div class="a" style="left:174.10000000000002px;top:20.599999999999998px;line-height:13px;color:#111;font-size:10.8px;white-space:nowrap">všetky</div><svg class="a" style="left:207.8px;top:23.7px" width="11" height="7"><path d="M1,1 L5.5,6 L10,1" fill="none" stroke="#111" stroke-width="1.9"/></svg>
<div class="a" style="left:225px;width:115px;text-align:center;top:1.26px;line-height:12px;font-size:10.8px;font-weight:bold;color:#fff;white-space:nowrap">Trieda</div>
<div class="a" style="left:229.5px;top:20.4px;width:107px;height:13.4px;background:#fff;border:1px solid #767676"></div><div class="a" style="left:233.5px;top:20.599999999999998px;line-height:13px;color:#111;font-size:10.8px;white-space:nowrap">všetky</div><svg class="a" style="left:322.0px;top:23.7px" width="11" height="7"><path d="M1,1 L5.5,6 L10,1" fill="none" stroke="#111" stroke-width="1.9"/></svg>
<div class="a" style="left:340px;width:108px;text-align:center;top:1.26px;line-height:12px;font-size:10.8px;font-weight:bold;color:#fff;white-space:nowrap">Typ platiteľa</div>
<div class="a" style="left:343.5px;top:20.4px;width:100px;height:13.4px;background:#fff;border:1px solid #767676"></div><div class="a" style="left:347.5px;top:20.599999999999998px;line-height:13px;color:#111;font-size:10.8px;white-space:nowrap">všetky</div><svg class="a" style="left:429.0px;top:23.7px" width="11" height="7"><path d="M1,1 L5.5,6 L10,1" fill="none" stroke="#111" stroke-width="1.9"/></svg>
<div class="a" style="left:448px;width:97px;text-align:center;top:1.26px;line-height:12px;font-size:10.8px;font-weight:bold;color:#fff;white-space:nowrap">Žiadosť o dotáciu</div>
<div class="a" style="left:457.5px;top:20.4px;width:78px;height:13.4px;background:#fff;border:1px solid #767676"></div><div class="a" style="left:461.5px;top:20.599999999999998px;line-height:13px;color:#111;font-size:10.8px;white-space:nowrap">všetky</div><svg class="a" style="left:521.0px;top:23.7px" width="11" height="7"><path d="M1,1 L5.5,6 L10,1" fill="none" stroke="#111" stroke-width="1.9"/></svg>
<div class="a" style="left:545px;width:219.60000000000002px;text-align:center;top:1.26px;line-height:12px;font-size:10.8px;font-weight:bold;color:#fff;white-space:nowrap">Obed</div>
<div class="a" style="left:555.5px;top:20.4px;width:200px;height:13.4px;background:#fff;border:1px solid #767676"></div><div class="a" style="left:559.5px;top:20.599999999999998px;line-height:13px;color:#111;font-size:10.8px;white-space:nowrap">všetky</div><svg class="a" style="left:741.0px;top:23.7px" width="11" height="7"><path d="M1,1 L5.5,6 L10,1" fill="none" stroke="#111" stroke-width="1.9"/></svg>
<div class="a" style="left:7.2px;top:42.0px;width:12px;height:12px;background:#fff;border:1.2px solid #8d8d8d;border-radius:2.5px"></div>
<div class="a" style="left:28.5px;top:42.16px;line-height:12px;font-size:10.8px;font-weight:normal;color:#2e6da4;white-space:nowrap;">Adamovič Adam</div>
<div class="a" style="left:169.4px;top:42.16px;line-height:12px;font-size:10.8px;font-weight:normal;color:#333;white-space:nowrap;">Žiak</div>
<div class="a" style="left:229.4px;top:42.16px;line-height:12px;font-size:10.8px;font-weight:normal;color:#333;white-space:nowrap;">1.A( zsfialkova )</div>
<div class="a" style="left:344px;top:42.16px;line-height:12px;font-size:10.8px;font-weight:normal;color:#333;white-space:nowrap;">1. stupeň</div>
<div class="a" style="left:564.75px;top:42.16px;line-height:12px;font-size:10.8px;font-weight:normal;color:#333;white-space:nowrap;">1.3.2023 - 30.6.2023</div>
<div class="a" style="left:678.5px;top:42.16px;line-height:12px;font-size:10.8px;font-weight:normal;color:#333;white-space:nowrap;">A, A, A, A, A, -, -</div>
<div class="a" style="left:7.2px;top:63.7px;width:12px;height:12px;background:#fff;border:1.2px solid #8d8d8d;border-radius:2.5px"></div>
<div class="a" style="left:28.5px;top:63.86px;line-height:12px;font-size:10.8px;font-weight:normal;color:#2e6da4;white-space:nowrap;">Akrová Zuzana</div>
<div class="a" style="left:169.4px;top:63.86px;line-height:12px;font-size:10.8px;font-weight:normal;color:#333;white-space:nowrap;">Žiak</div>
<div class="a" style="left:229.4px;top:63.86px;line-height:12px;font-size:10.8px;font-weight:normal;color:#333;white-space:nowrap;">MŠ - malkáči</div>
<div class="a" style="left:344px;top:63.86px;line-height:12px;font-size:10.8px;font-weight:normal;color:#333;white-space:nowrap;">MŠ</div>
<div class="a" style="left:564.75px;top:63.86px;line-height:12px;font-size:10.8px;font-weight:normal;color:#333;white-space:nowrap;">1.9.2022 - 31.7.2023</div>
<div class="a" style="left:678.5px;top:63.86px;line-height:12px;font-size:10.8px;font-weight:normal;color:#333;white-space:nowrap;">A, A, A, A, A, -, -</div>
<div class="a" style="left:7.2px;top:85.4px;width:12px;height:12px;background:#fff;border:1.2px solid #8d8d8d;border-radius:2.5px"></div>
<div class="a" style="left:28.5px;top:85.56px;line-height:12px;font-size:10.8px;font-weight:normal;color:#2e6da4;white-space:nowrap;">Antlová Žaneta</div>
<div class="a" style="left:169.4px;top:85.56px;line-height:12px;font-size:10.8px;font-weight:normal;color:#333;white-space:nowrap;">Žiak</div>
<div class="a" style="left:229.4px;top:85.56px;line-height:12px;font-size:10.8px;font-weight:normal;color:#333;white-space:nowrap;">3.A</div>
<div class="a" style="left:344px;top:85.56px;line-height:12px;font-size:10.8px;font-weight:normal;color:#333;white-space:nowrap;">1. stupeň</div>
<div class="a" style="left:564.75px;top:85.56px;line-height:12px;font-size:10.8px;font-weight:normal;color:#333;white-space:nowrap;">1.9.2022 - 30.6.2023</div>
<div class="a" style="left:678.5px;top:85.56px;line-height:12px;font-size:10.8px;font-weight:normal;color:#333;white-space:nowrap;">A, A, A, A, A, -, -</div>
<div class="a" style="left:7.2px;top:107.1px;width:12px;height:12px;background:#fff;border:1.2px solid #8d8d8d;border-radius:2.5px"></div>
<div class="a" style="left:28.5px;top:107.26px;line-height:12px;font-size:10.8px;font-weight:normal;color:#2e6da4;white-space:nowrap;">Aster František</div>
<div class="a" style="left:169.4px;top:107.26px;line-height:12px;font-size:10.8px;font-weight:normal;color:#333;white-space:nowrap;">Žiak</div>
<div class="a" style="left:229.4px;top:107.26px;line-height:12px;font-size:10.8px;font-weight:normal;color:#333;white-space:nowrap;">2.A</div>
<div class="a" style="left:344px;top:107.26px;line-height:12px;font-size:10.8px;font-weight:normal;color:#333;white-space:nowrap;">2. stupeň s DOT</div>
<div class="a" style="left:564.75px;top:107.26px;line-height:12px;font-size:10.8px;font-weight:normal;color:#333;white-space:nowrap;">1.9.2022 - 30.6.2023</div>
<div class="a" style="left:678.5px;top:107.26px;line-height:12px;font-size:10.8px;font-weight:normal;color:#333;white-space:nowrap;">A, A, A, A, A, -, -</div>
<div class="a" style="left:7.2px;top:128.8px;width:12px;height:12px;background:#fff;border:1.2px solid #8d8d8d;border-radius:2.5px"></div>
<div class="a" style="left:28.5px;top:128.96px;line-height:12px;font-size:10.8px;font-weight:normal;color:#2e6da4;white-space:nowrap;">Aster Miloš</div>
<div class="a" style="left:169.4px;top:128.96px;line-height:12px;font-size:10.8px;font-weight:normal;color:#333;white-space:nowrap;">Žiak</div>
<div class="a" style="left:229.4px;top:128.96px;line-height:12px;font-size:10.8px;font-weight:normal;color:#333;white-space:nowrap;">5.B</div>
<div class="a" style="left:344px;top:128.96px;line-height:12px;font-size:10.8px;font-weight:normal;color:#333;white-space:nowrap;">2. stupeň</div>
<div class="a" style="left:564.75px;top:128.96px;line-height:12px;font-size:10.8px;font-weight:normal;color:#333;white-space:nowrap;">1.9.2022 - 30.6.2023</div>
<div class="a" style="left:678.5px;top:128.96px;line-height:12px;font-size:10.8px;font-weight:normal;color:#333;white-space:nowrap;">A, A, A, A, A, -, -</div>
</div>
</div></div>
<div class="a" style="left:557.2px;top:380.9px;width:78.5px;height:45.2px;background:#fff;border:1px solid #6e6e6e;box-shadow:1px 2px 3px rgba(0,0,0,.3)"></div>
<div class="a" style="left:561px;top:381.76px;line-height:12px;font-size:10.8px;font-weight:normal;color:#111;white-space:nowrap;">všetky</div>
<div class="a" style="left:558.2px;top:395.5px;width:76.5px;height:14.8px;background:#1e90ff"></div>
<div class="a" style="left:561px;top:396.26px;line-height:12px;font-size:10.8px;font-weight:normal;color:#fff;white-space:nowrap;-webkit-text-stroke:.4px #fff">Neprázdne</div>
<div class="a" style="left:561px;top:409.76px;line-height:12px;font-size:10.8px;font-weight:normal;color:#111;white-space:nowrap;">Iba prázdne</div>
<div class="a" style="left:539.3px;top:393.1px;width:104.8px;height:20.2px;border:3px solid #e5131d"></div>
<div class="a" style="left:646.2px;top:390.2px;font:bold 20.5px Liberation Sans,sans-serif;color:#e5131d;line-height:24px;transform:skewX(-8deg);transform-origin:0 100%">3.</div>
<div id="sb" class="a">
  <div class="a" style="left:5px;top:6px;width:0;height:0;border-left:3.5px solid transparent;border-right:3.5px solid transparent;border-bottom:4px solid #a3a3a3"></div>
  <div class="a" style="left:2px;top:16px;width:13px;height:236px;background:#c1c1c1"></div>
</div>
<div id="frameL0" class="a"></div><div id="frameL" class="a"></div><div id="frameW" class="a"></div><div id="frameWB" class="a"></div>
<div id="frameR" class="a"></div>
<div id="frameB" class="a"></div>
</body></html>
